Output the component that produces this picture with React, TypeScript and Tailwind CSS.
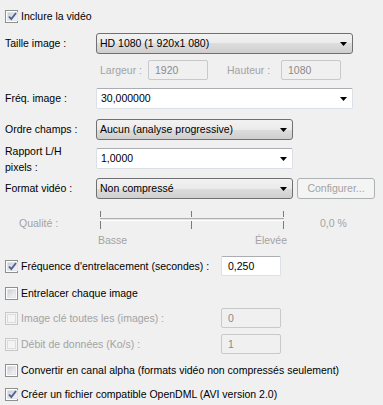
import React from "react";

function Arrow() {
  return (
    <svg width="7" height="4" viewBox="0 0 7 4" className="shrink-0">
      <path d="M0 0h7L3.5 4z" fill="#000" />
    </svg>
  );
}

function Check({ checked = false, disabled = false }: { checked?: boolean; disabled?: boolean }) {
  return (
    <span
      className={
        "w-[13px] h-[13px] shrink-0 border p-[1px] flex " +
        (disabled ? "border-[#c7c7c7] bg-[#f4f4f4]" : "border-[#8e8f8f] bg-white")
      }
    >
      <span
        className={
          "flex-1 flex items-center justify-center " +
          (disabled
            ? "bg-[#f4f4f4] border border-[#dcdcdc]"
            : "bg-[linear-gradient(135deg,#cbcfd5,#f6f6f6)] border border-[#e4e4e4]")
        }
      >
        {checked && (
          <svg width="9" height="9" viewBox="0 0 9 9">
            <path d="M1 4.5l2.3 2.6L8 1" fill="none" stroke="#4a5f97" strokeWidth="1.8" />
          </svg>
        )}
      </span>
    </span>
  );
}

function Select({ value, w }: { value: string; w: string }) {
  return (
    <div
      className={
        w +
        " h-[21px] shrink-0 rounded-[3px] border border-[#707070] flex items-center pl-[3px] pr-[5px] bg-[linear-gradient(to_bottom,#f2f2f2_0%,#ebebeb_50%,#dddddd_50%,#cfcfcf_100%)]"
      }
    >
      <span className="flex-1 truncate">{value}</span>
      <Arrow />
    </div>
  );
}

function Combo({ value, w }: { value: string; w: string }) {
  return (
    <div
      className={
        w +
        " h-[21px] shrink-0 rounded-[2px] border border-[#dbdfe6] border-t-[#abadb3] bg-white flex items-center pl-[4px] pr-[5px]"
      }
    >
      <span className="flex-1">{value}</span>
      <Arrow />
    </div>
  );
}

function Field({ value, disabled = false }: { value: string; disabled?: boolean }) {
  return (
    <div
      className={
        "w-[60px] h-[20px] shrink-0 rounded-[2px] border flex items-center pl-[6px] " +
        (disabled
          ? "border-[#c9c9c9] bg-[#f0f0f0] text-[#8a8a8a]"
          : "border-[#dbdfe6] border-t-[#abadb3] bg-white")
      }
    >
      {value}
    </div>
  );
}

export default function App() {
  const gray = "text-[#a3a3a3]";
  return (
    <div className="w-[383px] h-[405px] bg-[#f0f0f0] text-black text-[10.5px] leading-none font-['Liberation_Sans',Arial,sans-serif] pl-[5px] flex flex-col overflow-hidden">
      <div className="mt-[9px] h-[14px] flex items-center gap-[3px]">
        <Check checked />
        <span>Inclure la vidéo</span>
      </div>

      <div className="mt-[10px] h-[21px] flex items-center">
        <span className="w-[91px] shrink-0">Taille image :</span>
        <Select value="HD 1080 (1 920x1 080)" w="w-[257px]" />
      </div>

      <div className="mt-[6px] h-[20px] flex items-center">
        <span className={"w-[143px] pl-[95px] shrink-0 " + gray}>Largeur :</span>
        <Field value="1920" disabled />
        <span className={"w-[73px] pl-[19px] shrink-0 " + gray}>Hauteur :</span>
        <Field value="1080" disabled />
      </div>

      <div className="mt-[8px] h-[21px] flex items-center">
        <span className="w-[91px] shrink-0">Fréq. image :</span>
        <Combo value="30,000000" w="w-[257px]" />
      </div>

      <div className="mt-[10px] h-[21px] flex items-center">
        <span className="w-[91px] shrink-0">Ordre champs :</span>
        <Select value="Aucun (analyse progressive)" w="w-[197px]" />
      </div>

      <div className="mt-[8px] h-[21px] flex items-center">
        <span className="w-[91px] shrink-0 leading-[16px]">
          Rapport L/H
          <br />
          pixels :
        </span>
        <Combo value="1,0000" w="w-[197px]" />
      </div>

      <div className="mt-[9px] h-[21px] flex items-center">
        <span className="w-[91px] shrink-0">Format vidéo :</span>
        <Select value="Non compressé" w="w-[197px]" />
        <div className="ml-[4px] w-[78px] h-[21px] rounded-[3px] border border-[#adb2b5] bg-[#f4f4f4] flex items-center justify-center text-[#a3a3a3]">
          Configurer...
        </div>
      </div>

      <div className="mt-[9px] h-[40px] flex items-start">
        <span className={"w-[95px] pl-[14px] mt-[10px] shrink-0 " + gray}>Qualité :</span>
        <div className="w-[185px] shrink-0 flex flex-col">
          <svg width="185" height="24" viewBox="0 0 185 24" className="mt-[3px]">
            <g fill="#7a7a7a">
              <rect x="0" y="0" width="1" height="6" />
              <rect x="91" y="0" width="1" height="6" />
              <rect x="183" y="0" width="1" height="6" />
              <rect x="0" y="10" width="1" height="8" />
              <rect x="91" y="10" width="1" height="8" />
              <rect x="183" y="10" width="1" height="8" />
            </g>
            <rect x="0" y="7" width="184" height="1" fill="#b0b0b0" />
            <rect x="0" y="8" width="184" height="1" fill="#e3e3e3" />
            <rect x="0" y="9" width="184" height="1" fill="#ffffff" />
          </svg>
          <div className={"flex justify-between mt-[0px] " + gray}>
            <span className="-ml-[2px]">Basse</span>
            <span className="-mr-[2px]">Élevée</span>
          </div>
        </div>
        <span className={"ml-[35px] mt-[10px] " + gray}>0,0 %</span>
      </div>

      <div className="mt-[8px] h-[20px] flex items-center">
        <div className="w-[216px] shrink-0 flex items-center gap-[3px]">
          <Check checked />
          <span>Fréquence d'entrelacement (secondes) :</span>
        </div>
        <Field value="0,250" />
      </div>

      <div className="mt-[10px] h-[14px] flex items-center gap-[3px]">
        <Check />
        <span>Entrelacer chaque image</span>
      </div>

      <div className="mt-[8px] h-[20px] flex items-center">
        <div className={"w-[216px] shrink-0 flex items-center gap-[3px] " + gray}>
          <Check disabled />
          <span>Image clé toutes les (images) :</span>
        </div>
        <Field value="0" disabled />
      </div>

      <div className="mt-[6px] h-[20px] flex items-center">
        <div className={"w-[216px] shrink-0 flex items-center gap-[3px] " + gray}>
          <Check disabled />
          <span>Débit de données (Ko/s) :</span>
        </div>
        <Field value="1" disabled />
      </div>

      <div className="mt-[9px] h-[14px] flex items-center gap-[3px]">
        <Check />
        <span>Convertir en canal alpha (formats vidéo non compressés seulement)</span>
      </div>

      <div className="mt-[10px] h-[14px] flex items-center gap-[3px]">
        <Check checked />
        <span>Créer un fichier compatible OpenDML (AVI version 2.0)</span>
      </div>
    </div>
  );
}
